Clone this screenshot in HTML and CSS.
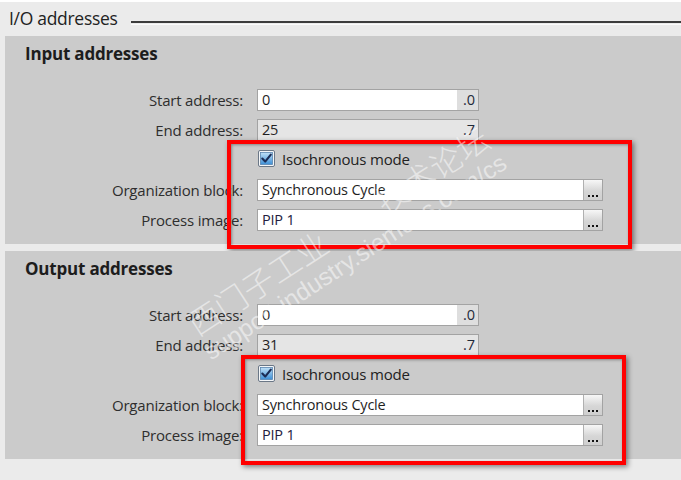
FILE: index.html
```html
<!DOCTYPE html>
<html>
<head>
<meta charset="utf-8">
<link rel="stylesheet" href="styles.css">
</head>
<body>
<div class="top">
  <span class="title">I/O addresses</span>
  <span class="rule"></span>
</div>

<section class="panel">
  <h2 class="heading">Input addresses</h2>
  <div class="rows">
    <div class="row">
      <span class="label">Start address:</span>
      <div class="field short"><span class="val">0</span><span class="bit">.0</span></div>
    </div>
    <div class="row">
      <span class="label">End address:</span>
      <div class="field short ro"><span class="val">25</span><span class="bit">.7</span></div>
    </div>
    <div class="row">
      <span class="label"></span>
      <div class="check">
        <svg class="cb" width="17" height="17" viewBox="0 0 17 17"><defs><linearGradient id="g1" x1="0" y1="0" x2="0" y2="1"><stop offset="0" stop-color="#bfe0f7"/><stop offset="1" stop-color="#3d8fd6"/></linearGradient></defs><rect x="0.5" y="0.5" width="16" height="16" rx="1.5" fill="#f4f6f8" stroke="#6b7786"/><rect x="2.5" y="2.5" width="12" height="12" fill="url(#g1)" stroke="#5a86b0" stroke-width="0.8"/><path d="M4.3 8.6 L7.2 11.6 L12.8 4.6" fill="none" stroke="#1b2c55" stroke-width="2.1" stroke-linecap="round" stroke-linejoin="round"/></svg>
        <span>Isochronous mode</span>
      </div>
    </div>
    <div class="row">
      <span class="label">Organization block:</span>
      <div class="field long"><span class="val">Synchronous Cycle</span><span class="dots"><i></i><i></i><i></i></span></div>
    </div>
    <div class="row">
      <span class="label">Process image:</span>
      <div class="field long"><span class="val pip">PIP 1</span><span class="dots"><i></i><i></i><i></i></span></div>
    </div>
  </div>
  <div class="redbox one"></div>
</section>

<section class="panel">
  <h2 class="heading">Output addresses</h2>
  <div class="rows">
    <div class="row">
      <span class="label">Start address:</span>
      <div class="field short"><span class="val">0</span><span class="bit">.0</span></div>
    </div>
    <div class="row">
      <span class="label">End address:</span>
      <div class="field short ro"><span class="val">31</span><span class="bit">.7</span></div>
    </div>
    <div class="row">
      <span class="label"></span>
      <div class="check">
        <svg class="cb" width="17" height="17" viewBox="0 0 17 17"><defs><linearGradient id="g2" x1="0" y1="0" x2="0" y2="1"><stop offset="0" stop-color="#bfe0f7"/><stop offset="1" stop-color="#3d8fd6"/></linearGradient></defs><rect x="0.5" y="0.5" width="16" height="16" rx="1.5" fill="#f4f6f8" stroke="#6b7786"/><rect x="2.5" y="2.5" width="12" height="12" fill="url(#g2)" stroke="#5a86b0" stroke-width="0.8"/><path d="M4.3 8.6 L7.2 11.6 L12.8 4.6" fill="none" stroke="#1b2c55" stroke-width="2.1" stroke-linecap="round" stroke-linejoin="round"/></svg>
        <span>Isochronous mode</span>
      </div>
    </div>
    <div class="row">
      <span class="label">Organization block:</span>
      <div class="field long"><span class="val">Synchronous Cycle</span><span class="dots"><i></i><i></i><i></i></span></div>
    </div>
    <div class="row">
      <span class="label">Process image:</span>
      <div class="field long"><span class="val pip">PIP 1</span><span class="dots"><i></i><i></i><i></i></span></div>
    </div>
  </div>
  <div class="redbox two"></div>
</section>

<div class="watermark">
  <div class="wm-cjk">西门子工业&#12288;&#12288;技术论坛</div>
  <div class="wm-url">support.industry.siemens.com/cs</div>
</div>
</body>
</html>
```

FILE: styles.css
```css
html, body {
  margin: 0;
  padding: 0;
}
body {
  width: 681px;
  height: 480px;
  overflow: hidden;
  background: #ebebeb;
  font-family: "Open Sans", "Noto Sans", "Liberation Sans", sans-serif;
  color: #2b2b2b;
  position: relative;
  border-top: 2px solid #ffffff;
  box-sizing: border-box;
}

.top {
  display: flex;
  align-items: flex-end;
  height: 34px;
  padding-left: 9px;
  box-sizing: border-box;
  padding-bottom: 7px;
}
.title {
  font-size: 17.5px;
  line-height: 22px;
  color: #222;
  letter-spacing: -0.3px;
}
.rule {
  flex: 1;
  margin-left: 13px;
  height: 1px;
  border-top: 2px solid #3c3c3c;
  border-bottom: 1px solid #fbfbfb;
  margin-bottom: 4px;
}

.panel {
  position: relative;
  margin-left: 5px;
  height: 208px;
  background: #cbcbcb;
  box-sizing: border-box;
  padding-top: 7px;
}
.panel + .panel {
  margin-top: 7px;
}

.heading {
  margin: 0 0 0 20px;
  font-size: 17px;
  line-height: 22px;
  font-weight: 700;
  color: #1d1d1d;
  letter-spacing: -0.2px;
}

.rows {
  margin-top: 20px;
  display: flex;
  flex-direction: column;
}
.row {
  display: grid;
  grid-template-columns: 238px auto;
  column-gap: 14px;
  align-items: center;
  height: 30px;
}
.label {
  text-align: right;
  font-size: 15px;
  color: #2e2e2e;
  letter-spacing: -0.2px;
  white-space: nowrap;
}

.field {
  display: flex;
  height: 22px;
  box-sizing: border-box;
  border: 1px solid #a3a3a3;
  background: #ffffff;
  font-size: 14.5px;
  color: #1f1f1f;
}
.field.short { width: 222px; }
.field.long { width: 346px; }
.field.ro { background: #e5e5e5; }
.val {
  flex: 1;
  padding-left: 4px;
  line-height: 20px;
  letter-spacing: -0.2px;
}
.val.pip { color: #221c40; }
.bit {
  width: 21px;
  background: #dedede;
  text-align: right;
  padding-right: 3px;
  line-height: 20px;
  box-sizing: border-box;
  color: #1f2a3a;
}
.field.ro .bit { background: #e5e5e5; }

.dots {
  width: 19px;
  border-left: 1px solid #b0b0b0;
  background: linear-gradient(#f7f7f7, #d6d6d6 55%, #cfcfcf);
  display: flex;
  align-items: flex-end;
  justify-content: center;
  gap: 2px;
  padding-bottom: 3px;
  box-sizing: border-box;
}
.dots i {
  width: 2px;
  height: 2px;
  background: #111;
}

.check {
  display: flex;
  align-items: center;
  gap: 7px;
  font-size: 15px;
  color: #222;
  margin-left: 1px;
  margin-top: -3px;
  letter-spacing: -0.2px;
}
.cb { display: block; }

.redbox {
  position: absolute;
  border: 4px solid #ff0000;
  box-sizing: border-box;
  box-shadow: 2px 2px 5px rgba(0, 0, 0, 0.45), inset 1px 1px 3px rgba(0, 0, 0, 0.35);
  pointer-events: none;
}
.redbox.one {
  left: 222px;
  top: 104px;
  width: 405px;
  height: 109px;
}
.redbox.two {
  left: 236px;
  top: 104px;
  width: 385px;
  height: 110px;
}

.watermark {
  position: absolute;
  left: 150px;
  top: 205px;
  width: 400px;
  height: 84px;
  transform: rotate(-33deg);
  transform-origin: 50% 50%;
  color: rgba(255, 255, 255, 0.5);
  pointer-events: none;
  text-align: center;
}
.wm-cjk {
  font-family: "Noto Sans CJK SC", sans-serif;
  font-size: 32px;
  line-height: 38px;
  font-weight: 300;
  white-space: nowrap;
}
.wm-url {
  font-family: "Liberation Sans", sans-serif;
  font-size: 24.5px;
  line-height: 28px;
  white-space: nowrap;
}
```
